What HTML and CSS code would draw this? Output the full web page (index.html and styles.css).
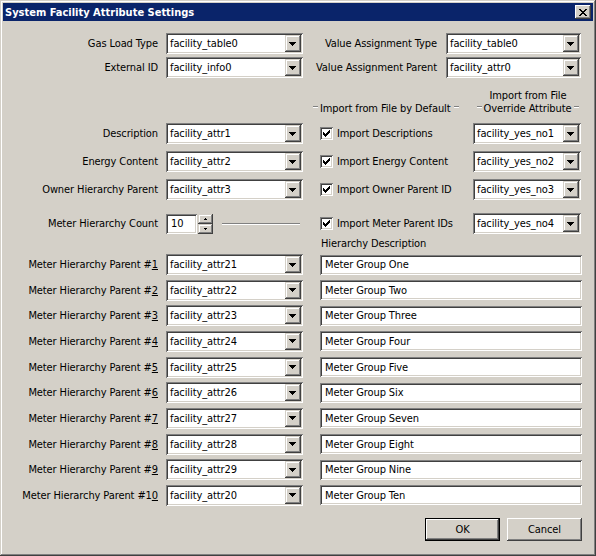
FILE: index.html
```html
<!DOCTYPE html>
<html>
<head>
<meta charset="utf-8">
<title>System Facility Attribute Settings</title>
<link rel="stylesheet" href="styles.css">
</head>
<body>
<div class="window">
  <div class="titlebar">
    <span class="title">System Facility Attribute Settings</span>
    <span class="close"><svg width="8" height="7" viewBox="0 0 8 7"><path d="M0 0h2v1H0zM6 0h2v1H6zM1 1h2v1H1zM5 1h2v1H5zM2 2h4v1H2zM3 3h2v1H3zM2 4h4v1H2zM1 5h2v1H1zM5 5h2v1H5zM0 6h2v1H0zM6 6h2v1H6z" fill="#000"/></svg></span>
  </div>
  <div class="body">
    <div class="row r-first">
      <span class="lbl">Gas Load Type</span>
      <div class="combo w137"><span class="val">facility_table0</span><span class="drop"></span></div>
      <span class="lbl2">Value Assignment Type</span>
      <div class="combo w135"><span class="val">facility_table0</span><span class="drop"></span></div>
    </div>
    <div class="row r-second">
      <span class="lbl">External ID</span>
      <div class="combo w137"><span class="val">facility_info0</span><span class="drop"></span></div>
      <span class="lbl2">Value Assignment Parent</span>
      <div class="combo w135"><span class="val">facility_attr0</span><span class="drop"></span></div>
    </div>

    <div class="headers">
      <div class="hgroup hg1"><span class="dash"></span><span class="htext">Import from File by Default</span><span class="dash"></span></div>
      <div class="hcol2">
        <div class="hline">Import from File</div>
        <div class="hgroup hg2"><span class="dash"></span><span class="htext">Override Attribute</span><span class="dash"></span></div>
      </div>
    </div>

    <div class="row r-desc">
      <span class="lbl">Description</span>
      <div class="combo w137"><span class="val">facility_attr1</span><span class="drop"></span></div>
      <div class="chk"><span class="box"><svg width="7" height="7" viewBox="0 0 7 7"><path d="M6 0h1v1H6zM5 1h2v1H5zM0 2h1v1H0zM4 2h3v1H4zM0 3h2v1H0zM3 3h3v1H3zM0 4h5v1H0zM1 5h3v1H1zM2 6h1v1H2z" fill="#000"/></svg></span><span>Import Descriptions</span></div>
      <div class="combo w108"><span class="val">facility_yes_no1</span><span class="drop"></span></div>
    </div>
    <div class="row r-mid">
      <span class="lbl">Energy Content</span>
      <div class="combo w137"><span class="val">facility_attr2</span><span class="drop"></span></div>
      <div class="chk"><span class="box"><svg width="7" height="7" viewBox="0 0 7 7"><path d="M6 0h1v1H6zM5 1h2v1H5zM0 2h1v1H0zM4 2h3v1H4zM0 3h2v1H0zM3 3h3v1H3zM0 4h5v1H0zM1 5h3v1H1zM2 6h1v1H2z" fill="#000"/></svg></span><span>Import Energy Content</span></div>
      <div class="combo w108"><span class="val">facility_yes_no2</span><span class="drop"></span></div>
    </div>
    <div class="row r-mid">
      <span class="lbl">Owner Hierarchy Parent</span>
      <div class="combo w137"><span class="val">facility_attr3</span><span class="drop"></span></div>
      <div class="chk"><span class="box"><svg width="7" height="7" viewBox="0 0 7 7"><path d="M6 0h1v1H6zM5 1h2v1H5zM0 2h1v1H0zM4 2h3v1H4zM0 3h2v1H0zM3 3h3v1H3zM0 4h5v1H0zM1 5h3v1H1zM2 6h1v1H2z" fill="#000"/></svg></span><span>Import Owner Parent ID</span></div>
      <div class="combo w108"><span class="val">facility_yes_no3</span><span class="drop"></span></div>
    </div>
    <div class="row r-count">
      <span class="lbl">Meter Hierarchy Count</span>
      <div class="spinedit"><span class="val">10</span></div>
      <div class="spin"><span class="sbtn up"></span><span class="sbtn down"></span></div>
      <span class="etched"></span>
      <div class="chk"><span class="box"><svg width="7" height="7" viewBox="0 0 7 7"><path d="M6 0h1v1H6zM5 1h2v1H5zM0 2h1v1H0zM4 2h3v1H4zM0 3h2v1H0zM3 3h3v1H3zM0 4h5v1H0zM1 5h3v1H1zM2 6h1v1H2z" fill="#000"/></svg></span><span>Import Meter Parent IDs</span></div>
      <div class="combo w108"><span class="val">facility_yes_no4</span><span class="drop"></span></div>
    </div>

    <div class="hdesc">Hierarchy Description</div>

    <div class="meters">
      <div class="row"><span class="lbl">Meter Hierarchy Parent #<u>1</u></span><div class="combo w137"><span class="val">facility_attr21</span><span class="drop"></span></div><div class="edit"><span class="val">Meter Group One</span></div></div>
      <div class="row"><span class="lbl">Meter Hierarchy Parent #<u>2</u></span><div class="combo w137"><span class="val">facility_attr22</span><span class="drop"></span></div><div class="edit"><span class="val">Meter Group Two</span></div></div>
      <div class="row"><span class="lbl">Meter Hierarchy Parent #<u>3</u></span><div class="combo w137"><span class="val">facility_attr23</span><span class="drop"></span></div><div class="edit"><span class="val">Meter Group Three</span></div></div>
      <div class="row"><span class="lbl">Meter Hierarchy Parent #<u>4</u></span><div class="combo w137"><span class="val">facility_attr24</span><span class="drop"></span></div><div class="edit"><span class="val">Meter Group Four</span></div></div>
      <div class="row"><span class="lbl">Meter Hierarchy Parent #<u>5</u></span><div class="combo w137"><span class="val">facility_attr25</span><span class="drop"></span></div><div class="edit"><span class="val">Meter Group Five</span></div></div>
      <div class="row"><span class="lbl">Meter Hierarchy Parent #<u>6</u></span><div class="combo w137"><span class="val">facility_attr26</span><span class="drop"></span></div><div class="edit"><span class="val">Meter Group Six</span></div></div>
      <div class="row"><span class="lbl">Meter Hierarchy Parent #<u>7</u></span><div class="combo w137"><span class="val">facility_attr27</span><span class="drop"></span></div><div class="edit"><span class="val">Meter Group Seven</span></div></div>
      <div class="row"><span class="lbl">Meter Hierarchy Parent #<u>8</u></span><div class="combo w137"><span class="val">facility_attr28</span><span class="drop"></span></div><div class="edit"><span class="val">Meter Group Eight</span></div></div>
      <div class="row"><span class="lbl">Meter Hierarchy Parent #<u>9</u></span><div class="combo w137"><span class="val">facility_attr29</span><span class="drop"></span></div><div class="edit"><span class="val">Meter Group Nine</span></div></div>
      <div class="row"><span class="lbl">Meter Hierarchy Parent #1<u>0</u></span><div class="combo w137"><span class="val">facility_attr20</span><span class="drop"></span></div><div class="edit"><span class="val">Meter Group Ten</span></div></div>
    </div>

    <div class="buttons">
      <div class="btn default"><span>OK</span></div>
      <div class="btn"><span>Cancel</span></div>
    </div>
  </div>
</div>
</body>
</html>
```

FILE: styles.css
```css
html, body {
  margin: 0;
  padding: 0;
}
body {
  width: 596px;
  height: 556px;
  overflow: hidden;
  font-family: "DejaVu Sans Condensed", "DejaVu Sans", sans-serif;
  font-stretch: semi-condensed;
  font-size: 11px;
  line-height: 13px;
  letter-spacing: -0.1px;
  color: #000;
  background: #d4d0c8;
}
.window {
  box-sizing: border-box;
  width: 596px;
  height: 556px;
  padding: 3px;
  background: #d4d0c8;
  box-shadow: inset -1px -1px 0 #404040, inset 1px 1px 0 #d4d0c8, inset -2px -2px 0 #808080, inset 2px 2px 0 #fff;
  display: flex;
  flex-direction: column;
}
.titlebar {
  height: 18px;
  flex: none;
  background: #0a246a;
  color: #fff;
  display: flex;
  align-items: center;
  justify-content: space-between;
  padding: 0 2px;
}
.title {
  font-weight: bold;
  font-size: 11px;
  letter-spacing: 0;
}
.close {
  width: 16px;
  height: 14px;
  box-sizing: border-box;
  background: #d4d0c8;
  box-shadow: inset -1px -1px 0 #404040, inset 1px 1px 0 #fff, inset -2px -2px 0 #808080, inset 2px 2px 0 #d4d0c8;
  display: flex;
  align-items: center;
  justify-content: center;
}
.close svg { display: block; }
.body {
  flex: 1;
  display: flex;
  flex-direction: column;
}
.row {
  display: flex;
  align-items: center;
  height: 21px;
  flex: none;
  white-space: nowrap;
}
.r-first { margin-top: 12px; }
.r-second { margin-top: 3px; }
.r-desc { margin-top: 8px; }
.r-mid { margin-top: 7px; }
.r-count { margin-top: 13px; }
.lbl {
  width: 155px;
  text-align: right;
  margin-right: 8px;
  flex: none;
}
.lbl u { text-underline-offset: 1px; }
.lbl2 {
  width: 134px;
  text-align: right;
  margin-right: 9px;
  flex: none;
}
.combo, .edit, .spinedit {
  box-sizing: border-box;
  height: 21px;
  background: #fff;
  padding: 2px;
  box-shadow: inset 1px 1px 0 #808080, inset -1px -1px 0 #fff, inset 2px 2px 0 #404040, inset -2px -2px 0 #d4d0c8;
  display: flex;
  align-items: center;
  flex: none;
}
.w137 { width: 137px; }
.w135 { width: 135px; }
.w108 { width: 108px; }
.val {
  flex: 1;
  padding-left: 2px;
  overflow: hidden;
}
.drop {
  width: 16px;
  height: 17px;
  box-sizing: border-box;
  background: #d4d0c8;
  box-shadow: inset -1px -1px 0 #404040, inset 1px 1px 0 #d4d0c8, inset -2px -2px 0 #808080, inset 2px 2px 0 #fff;
  display: flex;
  align-items: center;
  justify-content: center;
  flex: none;
}
.drop::after {
  content: "";
  width: 7px;
  height: 4px;
  margin-left: -1px;
  background:
    linear-gradient(#000, #000) 0 0 / 7px 1px no-repeat,
    linear-gradient(#000, #000) 1px 1px / 5px 1px no-repeat,
    linear-gradient(#000, #000) 2px 2px / 3px 1px no-repeat,
    linear-gradient(#000, #000) 3px 3px / 1px 1px no-repeat;
}
.headers {
  display: flex;
  align-items: flex-end;
  margin-top: 11px;
  height: 26px;
  flex: none;
  white-space: nowrap;
}
.hgroup {
  display: flex;
  align-items: center;
}
.hg1 { margin-left: 310px; }
.hcol2 {
  margin-left: auto;
  margin-right: 11px;
  width: 108px;
  display: flex;
  flex-direction: column;
  align-items: center;
}
.hline { text-align: center; }
.dash {
  width: 5px;
  height: 2px;
  box-sizing: border-box;
  border-top: 1px solid #808080;
  border-bottom: 1px solid #fff;
  margin-top: -3px;
}
.htext { padding: 0 3px 0 2px; }
.chk {
  margin-left: 17px;
  width: 153px;
  display: flex;
  align-items: center;
  flex: none;
}
.box {
  width: 13px;
  height: 13px;
  box-sizing: border-box;
  background: #fff;
  box-shadow: inset 1px 1px 0 #808080, inset -1px -1px 0 #fff, inset 2px 2px 0 #404040, inset -2px -2px 0 #d4d0c8;
  display: flex;
  align-items: center;
  justify-content: center;
  margin-right: 4px;
  flex: none;
}
.box svg { display: block; }
.spinedit {
  width: 31px;
  height: 20px;
  padding-left: 3px;
}
.spin {
  margin-left: 1px;
  width: 15px;
  height: 20px;
  display: flex;
  flex-direction: column;
  flex: none;
}
.sbtn {
  height: 10px;
  box-sizing: border-box;
  background: #d4d0c8;
  box-shadow: inset -1px -1px 0 #404040, inset 1px 1px 0 #d4d0c8, inset -2px -2px 0 #808080, inset 2px 2px 0 #fff;
  display: flex;
  align-items: center;
  justify-content: center;
}
.sbtn::after {
  content: "";
  width: 3px;
  height: 2px;
  margin-left: -1px;
}
.up::after {
  background:
    linear-gradient(#000, #000) 1px 0 / 1px 1px no-repeat,
    linear-gradient(#000, #000) 0 1px / 3px 1px no-repeat;
}
.down::after {
  background:
    linear-gradient(#000, #000) 0 0 / 3px 1px no-repeat,
    linear-gradient(#000, #000) 1px 1px / 1px 1px no-repeat;
}
.etched {
  width: 78px;
  height: 2px;
  box-sizing: border-box;
  border-top: 1px solid #808080;
  border-bottom: 1px solid #fff;
  margin-left: 9px;
  margin-right: 3px;
  flex: none;
}
.hdesc {
  margin-top: 3px;
  margin-left: 318px;
  flex: none;
}
.meters {
  margin-top: 4px;
  display: flex;
  flex-direction: column;
  gap: 4.67px;
  flex: none;
}
.edit {
  margin-left: 17px;
  width: 262px;
  height: 20px;
}
.edit .val { padding-left: 3px; }
.buttons {
  margin-top: 12px;
  display: flex;
  justify-content: flex-end;
  gap: 7px;
  padding-right: 11px;
  flex: none;
}
.btn {
  width: 75px;
  height: 23px;
  box-sizing: border-box;
  background: #d4d0c8;
  box-shadow: inset -1px -1px 0 #404040, inset 1px 1px 0 #fff, inset -2px -2px 0 #808080, inset 2px 2px 0 #d4d0c8;
  display: flex;
  align-items: center;
  justify-content: center;
}
.btn.default {
  border: 1px solid #000;
}
```
